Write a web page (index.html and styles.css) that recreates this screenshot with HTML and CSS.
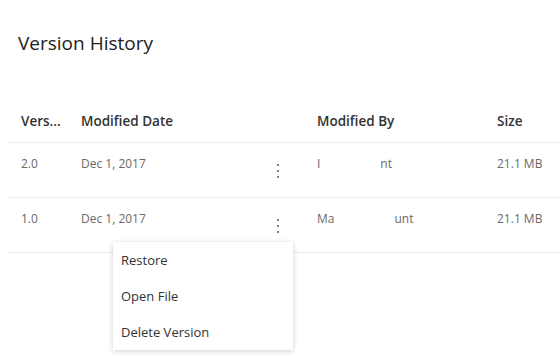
FILE: index.html
```html
<!DOCTYPE html>
<html lang="en">
<head>
    <meta charset="UTF-8">
    <meta name="viewport" content="width=device-width, initial-scale=1.0">
    <title>Version History</title>
    <link rel="stylesheet" href="styles.css">
</head>
<body>
    <div class="panel">
        <h1 class="title">Version History</h1>
        <div class="table">
            <div class="row head">
                <div class="cell">Vers...</div>
                <div class="cell">Modified Date</div>
                <div class="cell">Modified By</div>
                <div class="cell">Size</div>
            </div>
            <div class="row">
                <div class="cell">2.0</div>
                <div class="cell date">
                    <span>Dec 1, 2017</span>
                    <button class="more" aria-label="More"><i></i><i></i><i></i></button>
                </div>
                <div class="cell"><span class="hidden-a">I</span><span class="hidden-b">nt</span></div>
                <div class="cell">21.1 MB</div>
            </div>
            <div class="row">
                <div class="cell">1.0</div>
                <div class="cell date">
                    <span>Dec 1, 2017</span>
                    <button class="more" aria-label="More"><i></i><i></i><i></i></button>
                    <div class="menu">
                        <div class="menu-item">Restore</div>
                        <div class="menu-item">Open File</div>
                        <div class="menu-item">Delete Version</div>
                    </div>
                </div>
                <div class="cell"><span class="hidden-a">Ma</span><span class="hidden-b">unt</span></div>
                <div class="cell">21.1 MB</div>
            </div>
        </div>
    </div>
</body>
</html>
```

FILE: styles.css
```css
* {
    margin: 0;
    padding: 0;
    box-sizing: border-box;
    font-family: 'Open Sans', 'Noto Sans', sans-serif;
}
html, body {
    height: 100%;
}
body {
    background: #fff;
    color: #333;
}
.panel {
    min-height: 100%;
    padding: 28px 0 0 8px;
}
.title {
    font-size: 19px;
    font-weight: 400;
    color: #222;
    padding-left: 10px;
    line-height: 30px;
}
.table {
    margin-top: 42px;
}
.row {
    display: grid;
    grid-template-columns: 60px 236px 180px 1fr;
    height: 55px;
    border-bottom: 1px solid #ececec;
    font-size: 12px;
    color: #6a6a6a;
}
.row.head {
    height: 43px;
    align-items: center;
    font-size: 13.5px;
    font-weight: 600;
    color: #333;
}
.cell {
    padding: 12px 0 0 13px;
}
.head .cell {
    padding-top: 0;
}
.date {
    position: relative;
    display: flex;
    justify-content: space-between;
}
.more {
    background: none;
    border: none;
    width: 16px;
    height: 22px;
    margin: 5px 18px 0 0;
    display: flex;
    flex-direction: column;
    align-items: center;
    justify-content: center;
    gap: 4px;
}
.more i {
    display: block;
    width: 2px;
    height: 2px;
    background: #6f8a8a;
}
.hidden-b {
    margin-left: 60px;
}
.menu {
    position: absolute;
    z-index: 5;
    left: 45px;
    top: 44px;
    width: 180px;
    background: #fff;
    box-shadow: 0 1px 5px rgba(0,0,0,0.2);
}
.menu-item {
    height: 36px;
    line-height: 36px;
    padding-left: 8px;
    font-size: 13px;
    color: #333;
}
```
